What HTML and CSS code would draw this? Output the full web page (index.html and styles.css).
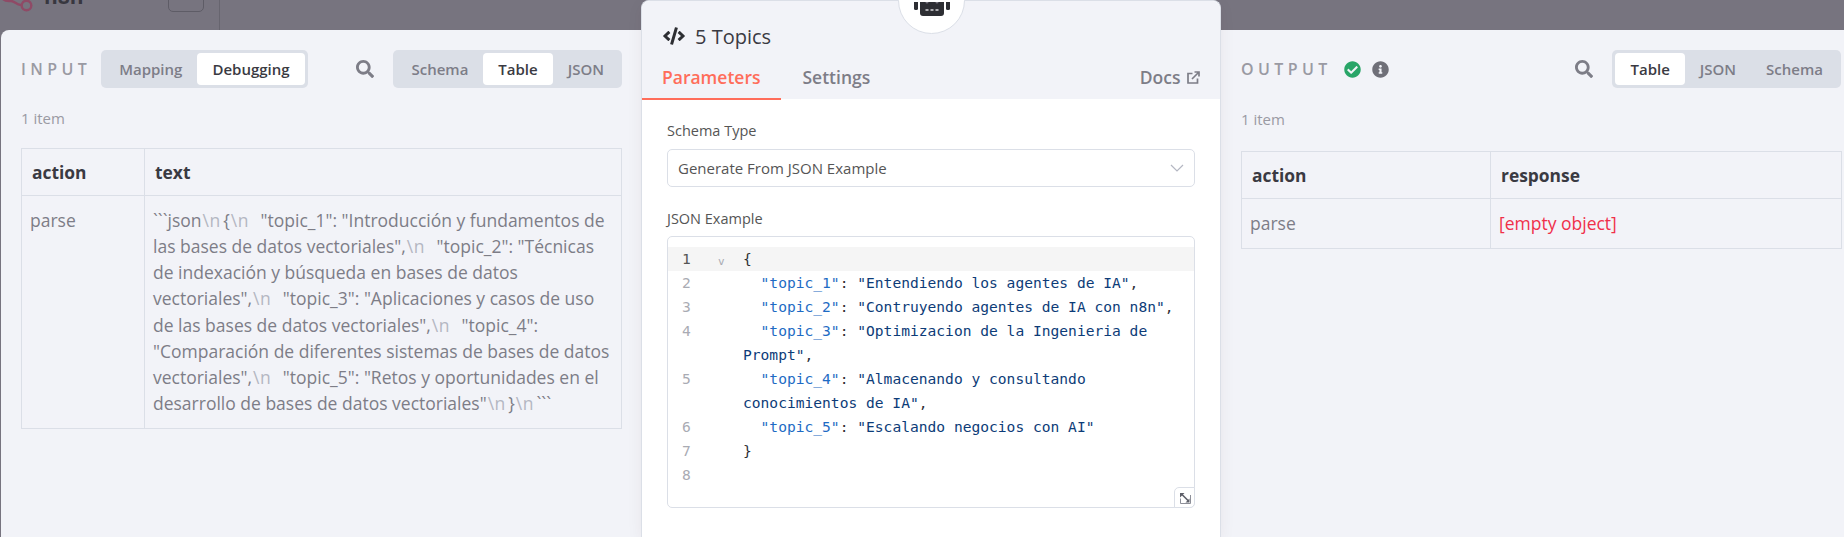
FILE: index.html
```html
<!DOCTYPE html>
<html lang="en">
<head>
    <meta charset="UTF-8">
    <title>5 Topics</title>
    <link rel="stylesheet" href="styles.css">
</head>
<body>
    <!-- barra de arriba, queda detras del overlay -->
    <div class="topbar">
        <svg class="logo" width="34" height="30" viewBox="0 0 34 30">
            <path d="M2 -2c3 4 7 3 9 3 4 0 5 4 10 4" fill="none" stroke="#8f4a66" stroke-width="2.4"/>
            <circle cx="26.500" cy="5.500" r="4.800" fill="none" stroke="#8f4a66" stroke-width="2.400"/>
        </svg>
        <span class="brand">n8n</span>
        <span class="top-btn"><span class="top-tick"></span></span>
        <span class="top-line"></span>
    </div>

    <div class="modal">
        <!-- INPUT -->
        <section class="side side-input">
            <div class="side-head">
                <span class="side-title">INPUT</span>
                <div class="toggle">
                    <span class="toggle-btn">Mapping</span>
                    <span class="toggle-btn active">Debugging</span>
                </div>
                <svg class="search" viewBox="0 0 512 512"><path d="M505 442.7L405.3 343c-4.5-4.5-10.6-7-17-7H372c27.6-35.3 44-79.7 44-128C416 93.1 322.9 0 208 0S0 93.1 0 208s93.1 208 208 208c48.3 0 92.7-16.4 128-44v16.3c0 6.4 2.5 12.5 7 17l99.7 99.7c9.4 9.4 24.6 9.4 33.9 0l28.3-28.3c9.4-9.4 9.4-24.6.1-34zM208 336c-70.7 0-128-57.2-128-128 0-70.7 57.2-128 128-128 70.7 0 128 57.2 128 128 0 70.7-57.2 128-128 128z"/></svg>
                <div class="toggle">
                    <span class="toggle-btn">Schema</span>
                    <span class="toggle-btn active">Table</span>
                    <span class="toggle-btn">JSON</span>
                </div>
            </div>
            <div class="item-count">1 item</div>
            <table class="data-table">
                <tr><th class="col-input">action</th><th>text</th></tr>
                <tr>
                    <td>parse</td>
                    <td class="long-text">```json<span class="nl">\n</span>{<span class="nl">\n</span>  "topic_1": "Introducción y fundamentos de las bases de datos vectoriales",<span class="nl">\n</span>  "topic_2": "Técnicas de indexación y búsqueda en bases de datos vectoriales",<span class="nl">\n</span>  "topic_3": "Aplicaciones y casos de uso de las bases de datos vectoriales",<span class="nl">\n</span>  "topic_4": "Comparación de diferentes sistemas de bases de datos vectoriales",<span class="nl">\n</span>  "topic_5": "Retos y oportunidades en el desarrollo de bases de datos vectoriales"<span class="nl">\n</span>}<span class="nl">\n</span>```</td>
                </tr>
            </table>
        </section>

        <!-- panel central -->
        <section class="node-panel">
            <div class="robot-badge">
                <svg width="36" height="16" viewBox="0 0 36 16">
                    <rect x="0" y="-4" width="4" height="12" rx="1.500" fill="#2d2e33"/>
                    <rect x="32" y="-4" width="4" height="12" rx="1.500" fill="#2d2e33"/>
                    <rect x="6" y="-8" width="24" height="22" rx="3" fill="#2d2e33"/>
                    <circle cx="13" cy="0" r="1.500" fill="#77747f"/>
                    <circle cx="23" cy="0" r="1.500" fill="#77747f"/>
                    <path d="M11.500 8h3M16.500 8h3M21.500 8h3" stroke="#d8d8dc" stroke-width="1.400"/>
                </svg>
            </div>
            <div class="node-top">
                <div class="node-title">
                    <svg class="code-icon" viewBox="0 0 640 512"><path d="M278.9 511.5l-61-17.7c-6.4-1.8-10-8.5-8.2-14.9L346.2 8.7c1.8-6.4 8.5-10 14.9-8.2l61 17.7c6.4 1.8 10 8.5 8.2 14.9L293.8 503.3c-1.9 6.4-8.5 10.1-14.9 8.2zm-114-112.2l43.5-46.4c4.6-4.9 4.3-12.7-.8-17.2L117 256l90.6-79.7c5.1-4.5 5.5-12.3.8-17.2l-43.5-46.4c-4.5-4.8-12.1-5.1-17-.5L3.8 247.2c-5.1 4.7-5.1 12.8 0 17.5l144.1 135.1c4.9 4.6 12.5 4.4 17-.5zm327.2.6l144.1-135.1c5.1-4.7 5.1-12.8 0-17.5L492.1 112.1c-4.8-4.5-12.4-4.3-17 .5L431.6 159c-4.6 4.9-4.3 12.7.8 17.2L523 256l-90.6 79.7c-5.1 4.5-5.5 12.3-.8 17.2l43.5 46.4c4.5 4.9 12.1 5.1 17 .6z"/></svg>
                    <span>5 Topics</span>
                </div>
                <div class="tabs">
                    <span class="tab active">Parameters</span>
                    <span class="tab">Settings</span>
                    <span class="docs">Docs
                        <svg class="docs-icon" width="13" height="13" viewBox="0 0 13 13" fill="none" stroke="#7d7d87" stroke-width="1.700"><path d="M10.500 7.500v4.500H1v-9.500h4.500M5 8l7-7M7.500 1H12v4.500"/></svg>
                    </span>
                </div>
            </div>
            <div class="node-body">
                <label class="field-label">Schema Type</label>
                <div class="select-box">
                    <span>Generate From JSON Example</span>
                    <svg width="14" height="8" viewBox="0 0 14 8" fill="none" stroke="#b4b7c2" stroke-width="1.200"><path d="M1 1l6 6 6-6"/></svg>
                </div>
                <label class="field-label label-json">JSON Example</label>
                <div class="editor">
                    <div class="line active-line"><span class="num">1</span><span class="fold">v</span><span class="code">{</span></div>
                    <div class="line"><span class="num">2</span><span class="fold"></span><span class="code">  <i class="key">"topic_1"</i>: <i class="str">"Entendiendo los agentes de IA"</i>,</span></div>
                    <div class="line"><span class="num">3</span><span class="fold"></span><span class="code">  <i class="key">"topic_2"</i>: <i class="str">"Contruyendo agentes de IA con n8n"</i>,</span></div>
                    <div class="line"><span class="num">4</span><span class="fold"></span><span class="code">  <i class="key">"topic_3"</i>: <i class="str">"Optimizacion de la Ingenieria de Prompt"</i>,</span></div>
                    <div class="line"><span class="num">5</span><span class="fold"></span><span class="code">  <i class="key">"topic_4"</i>: <i class="str">"Almacenando y consultando conocimientos de IA"</i>,</span></div>
                    <div class="line"><span class="num">6</span><span class="fold"></span><span class="code">  <i class="key">"topic_5"</i>: <i class="str">"Escalando negocios con AI"</i></span></div>
                    <div class="line"><span class="num">7</span><span class="fold"></span><span class="code">}</span></div>
                    <div class="line"><span class="num">8</span><span class="fold"></span><span class="code"></span></div>
                    <div class="resize-btn">
                        <svg width="12" height="12" viewBox="0 0 12 12" fill="none"><path d="M1.500 6.500v5h10V3" stroke="#8d8f98"/><path d="M3 2.500l6.500 6.500" stroke="#5d5f68" stroke-width="1.600"/><path d="M1 1h4.500L1 5.500zM10.500 10.500H6.500l4-4z" fill="#5d5f68"/></svg>
                    </div>
                </div>
            </div>
        </section>

        <!-- OUTPUT -->
        <section class="side side-output">
            <div class="side-head">
                <span class="side-title">OUTPUT</span>
                <svg class="status ok" viewBox="0 0 512 512"><path d="M504 256c0 136.967-111.033 248-248 248S8 392.967 8 256 119.033 8 256 8s248 111.033 248 248zM227.314 387.314l184-184c6.248-6.248 6.248-16.379 0-22.627l-22.627-22.627c-6.248-6.249-16.379-6.25-22.628 0L216 308.118l-70.059-70.059c-6.248-6.248-16.379-6.248-22.628 0l-22.627 22.627c-6.248 6.248-6.248 16.379 0 22.627l104 104c6.249 6.249 16.379 6.249 22.628.001z"/></svg>
                <svg class="status info" viewBox="0 0 512 512"><path d="M256 8C119.043 8 8 119.083 8 256c0 136.997 111.043 248 248 248s248-111.003 248-248C504 119.083 392.957 8 256 8zm0 110c23.196 0 42 18.804 42 42s-18.804 42-42 42-42-18.804-42-42 18.804-42 42-42zm56 254c0 6.627-5.373 12-12 12h-88c-6.627 0-12-5.373-12-12v-24c0-6.627 5.373-12 12-12h12v-64h-12c-6.627 0-12-5.373-12-12v-24c0-6.627 5.373-12 12-12h64c6.627 0 12 5.373 12 12v100h12c6.627 0 12 5.373 12 12v24z"/></svg>
                <svg class="search" viewBox="0 0 512 512"><path d="M505 442.7L405.3 343c-4.5-4.5-10.6-7-17-7H372c27.6-35.3 44-79.7 44-128C416 93.1 322.9 0 208 0S0 93.1 0 208s93.1 208 208 208c48.3 0 92.7-16.4 128-44v16.3c0 6.4 2.5 12.5 7 17l99.7 99.7c9.4 9.4 24.6 9.4 33.9 0l28.3-28.3c9.4-9.4 9.4-24.6.1-34zM208 336c-70.7 0-128-57.2-128-128 0-70.7 57.2-128 128-128 70.7 0 128 57.2 128 128 0 70.7-57.2 128-128 128z"/></svg>
                <div class="toggle">
                    <span class="toggle-btn active">Table</span>
                    <span class="toggle-btn">JSON</span>
                    <span class="toggle-btn">Schema</span>
                </div>
            </div>
            <div class="item-count">1 item</div>
            <table class="data-table">
                <tr><th class="col-output">action</th><th>response</th></tr>
                <tr>
                    <td>parse</td>
                    <td class="empty-value">[empty object]</td>
                </tr>
            </table>
        </section>
    </div>
</body>
</html>
```

FILE: styles.css
```css
* {
    box-sizing: border-box;
}

html, body {
    height: 100%;
}

body {
    margin: 0;
    display: flex;
    flex-direction: column;
    overflow: hidden;
    background-color: #77747f;
    font-family: "Open Sans", "Noto Sans", sans-serif;
    font-size: 16px;
    color: #7d7d87;
}

/* barra de arriba */
.topbar {
    height: 30px;
    flex: none;
    display: flex;
    overflow: hidden;
}

.logo {
    flex: none;
}

.brand {
    margin: -19px 0 0 10px;
    width: 124px;
    font-size: 21px;
    font-weight: 700;
    line-height: 30px;
    color: #38373f;
}

.top-btn {
    width: 36px;
    height: 30px;
    margin-top: -18px;
    padding-top: 18px;
    display: flex;
    justify-content: center;
    border: 1px solid #5e5c66;
    border-radius: 5px;
}

.top-tick {
    width: 2px;
    height: 2px;
    margin-top: -17px;
    background-color: #38373f;
}

.top-line {
    width: 1px;
    margin-left: 15px;
    background-color: #67656f;
}

/* modal */
.modal {
    flex: 1;
    min-height: 0;
    margin-left: 1px;
    display: grid;
    grid-template-columns: 640px 580px 1fr;
    background-color: #f2f3f8;
    border-radius: 8px 0 0 0;
}

.side {
    padding: 20px 0 0 20px;
}

.side-input {
    padding-right: 19px;
}

.side-output {
    padding-left: 20px;
    padding-right: 2px;
}

.side-head {
    display: flex;
    align-items: center;
    height: 38px;
}

.side-title {
    font-size: 16px;
    font-weight: 600;
    letter-spacing: 4.4px;
    color: #9a9aa3;
    margin-right: 10px;
}

.side-output .side-head .toggle {
    margin-right: 1px;
}

.search {
    width: 18px;
    height: 18px;
    margin-left: auto;
    margin-right: 19px;
    fill: #7d7d87;
}

.status {
    width: 17px;
    height: 17px;
    margin-left: 2px;
}

.status.ok {
    fill: #29a568;
}

.status.info {
    margin-left: 11px;
    fill: #6f6f78;
}

.toggle {
    display: flex;
    height: 38px;
    padding: 3px;
    border-radius: 5px;
    background-color: #dbdfe7;
}

.toggle-btn {
    padding: 0 15px;
    border-radius: 4px;
    font-size: 15px;
    font-weight: 600;
    line-height: 32px;
    color: #7d7d87;
}

.toggle-btn.active {
    background-color: #fff;
    color: #3a3a42;
}

.item-count {
    margin-top: 20px;
    font-size: 15px;
    line-height: 20px;
    color: #9a9aa3;
}

/* tablas */
.data-table {
    width: 100%;
    margin-top: 20px;
    border-collapse: collapse;
    table-layout: fixed;
}

.side-output .item-count {
    margin-top: 21px;
}

.side-output .data-table {
    margin-top: 22px;
}

.data-table th,
.data-table td {
    border: 1px solid #dbdfe7;
    text-align: left;
    vertical-align: top;
}

.data-table th {
    height: 47px;
    padding: 0 10px;
    vertical-align: middle;
    font-size: 17.4px;
    font-weight: 700;
    color: #3a3a42;
}

.data-table td {
    padding: 11px 8px 12px;
    font-size: 17.5px;
    line-height: 26.15px;
    color: #7d7d87;
}

.col-input {
    width: 123px;
}

.col-output {
    width: 249px;
}

.long-text {
    white-space: pre-wrap;
}

.nl {
    margin: 0 2.5px 0 1px;
    letter-spacing: 0.5px;
    color: #b4b7c2;
}

.data-table .empty-value {
    color: #f0304a;
}

/* panel central */
.node-panel {
    position: relative;
    margin-top: -30px;
    display: flex;
    flex-direction: column;
    border-radius: 8px 8px 0 0;
    background-color: #fff;
    border: 1px solid #dbdfe7;
    border-bottom: none;
    box-shadow: 0 4px 16px rgba(68, 28, 23, 0.06);
}

/* va encima del borde del panel */
.robot-badge {
    position: absolute;
    left: 256px;
    top: -34px;
    width: 67px;
    height: 67px;
    padding-top: 34px;
    display: flex;
    justify-content: center;
    border-radius: 50%;
    border: 1px solid #dbdfe7;
    background-color: #fff;
}

.node-top {
    flex: none;
    height: 98px;
    background-color: #f2f3f8;
    border-radius: 8px 8px 0 0;
}

.node-title {
    display: flex;
    align-items: center;
    gap: 10px;
    height: 70px;
    padding: 0 0 0 21px;
    font-size: 20px;
    font-weight: 500;
    color: #3a3a42;
}

.code-icon {
    width: 22px;
    height: 18px;
    fill: #2d2e33;
}

.tabs {
    display: flex;
    align-items: flex-start;
    height: 26px;
    margin-top: -7px;
}

.tab {
    height: 36px;
    padding: 0 20px 0 21px;
    font-size: 17.5px;
    font-weight: 600;
    line-height: 26px;
    color: #7d7d87;
}

.tab.active {
    padding-left: 20px;
    padding-right: 21px;
    color: #ff6d5a;
    border-bottom: 2px solid #ff6d5a;
}

.docs {
    margin-left: auto;
    padding-right: 20px;
    font-size: 17.5px;
    font-weight: 600;
    line-height: 26px;
}

.docs-icon {
    margin-left: 2px;
}

.node-body {
    padding: 21px 25px 0 25px;
}

.field-label {
    display: block;
    font-size: 14.5px;
    line-height: 22px;
    color: #555;
}

.label-json {
    margin-top: 21px;
}

.select-box {
    display: flex;
    align-items: center;
    justify-content: space-between;
    height: 38px;
    margin-top: 7px;
    padding: 0 10px;
    border: 1px solid #dbdfe7;
    border-radius: 5px;
    font-size: 15px;
    color: #555;
}

.editor {
    position: relative;
    height: 272px;
    margin-top: 6px;
    padding-top: 10px;
    border: 1px solid #dbdfe7;
    border-radius: 5px;
    font-family: "DejaVu Sans Mono", monospace;
    font-size: 14.6px;
    line-height: 24px;
}

.line {
    display: flex;
}

.active-line {
    background-color: #f5f5f5;
}

.num {
    flex: none;
    width: 40px;
    padding-left: 14px;
    color: #a9abb3;
}

.active-line .num {
    color: #555;
}

.fold {
    flex: none;
    width: 35px;
    padding-left: 10px;
    font-size: 11px;
    line-height: 30px;
    height: 24px;
    color: #a9abb3;
}

.code {
    flex: 1;
    white-space: pre-wrap;
    color: #2f3136;
}

.key, .str {
    font-style: normal;
}

.key {
    color: #1e6bc4;
}

.str {
    color: #0d3c78;
}

.resize-btn {
    position: absolute;
    right: -1px;
    bottom: -1px;
    width: 21px;
    height: 21px;
    display: flex;
    align-items: center;
    justify-content: center;
    border: 1px solid #dbdfe7;
    border-radius: 5px 0 5px 0;
    background-color: #fff;
}
```
